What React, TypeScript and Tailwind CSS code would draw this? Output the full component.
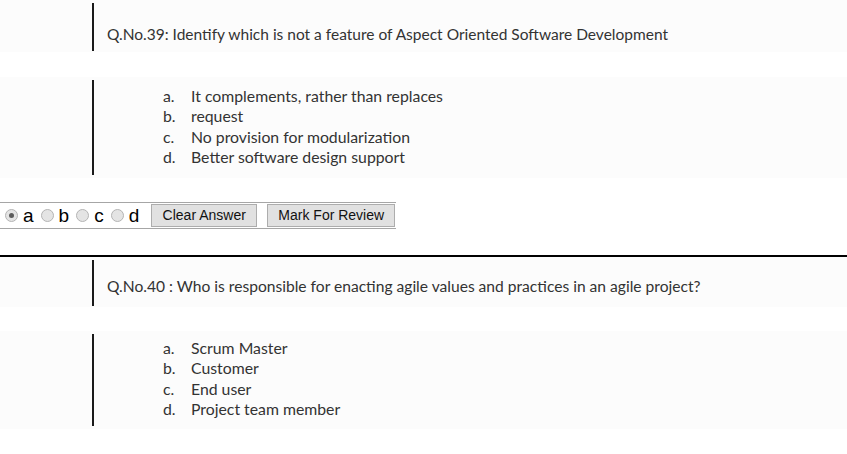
const q39 = {
  title: "Q.No.39: Identify which is not a feature of Aspect Oriented Software Development",
  options: [
    "It complements, rather than replaces",
    "request",
    "No provision for modularization",
    "Better software design support",
  ],
};

const q40 = {
  title: "Q.No.40 : Who is responsible for enacting agile values and practices in an agile project?",
  options: ["Scrum Master", "Customer", "End user", "Project team member"],
};

const letters = ["a", "b", "c", "d"];

function QuestionImage({
  title,
  options,
  compact,
}: {
  title: string;
  options: string[];
  compact?: boolean;
}) {
  return (
    <div className="font-['Lato',sans-serif] text-[#333333]">
      <div className={compact ? "flex h-[50px] bg-[#fcfcfc] pl-[92px]" : "flex h-[52px] bg-[#fcfcfc] pl-[92px]"}>
        <div className={compact ? "mt-[3px] h-[46px] w-[2px] bg-[#1a1a1a]" : "mt-[3px] h-[48px] w-[2px] bg-[#1a1a1a]"} />
        <div className={compact ? "ml-[13px] pt-[19px] text-[15.6px] leading-[20px]" : "ml-[13px] pt-[24px] text-[15.5px] leading-[20px]"}>
          {title}
        </div>
      </div>
      <div className={compact ? "mt-[24px] flex h-[98px] bg-[#fcfcfc] pl-[92px]" : "mt-[25px] flex h-[101px] bg-[#fcfcfc] pl-[92px]"}>
        <div className={compact ? "mt-[3px] h-[92px] w-[2px] bg-[#1a1a1a]" : "mt-[3px] h-[95px] w-[2px] bg-[#1a1a1a]"} />
        <ol className={compact ? "ml-[69px] pt-[7px] text-[15.8px] leading-[20.3px]" : "ml-[69px] pt-[9px] text-[15.8px] leading-[20.3px]"}>
          {options.map((o, i) => (
            <li key={o} className="flex">
              <span className="w-[28px]">{letters[i]}.</span>
              <span>{o}</span>
            </li>
          ))}
        </ol>
      </div>
    </div>
  );
}

function Radio({ checked }: { checked?: boolean }) {
  return (
    <span className="flex h-[13px] w-[13px] items-center justify-center rounded-full border border-[#b4b4b4] bg-[#e4e4e4]">
      {checked && <span className="h-[5px] w-[5px] rounded-full bg-[#5c5c5c]" />}
    </span>
  );
}

function AnswerBar() {
  return (
    <div className="flex h-[27px] w-[396px] items-center border-y border-[#a6a6a6] font-['Liberation_Sans',Arial,sans-serif]">
      <div className="flex items-center pl-[5px] text-[19px] leading-none text-black">
        {letters.map((l) => (
          <label key={l} className="mr-[7px] flex items-center gap-[5px]">
            <Radio checked={l === "a"} />
            <span>{l}</span>
          </label>
        ))}
      </div>
      <button className="ml-[5px] h-[23px] w-[106px] border border-[#adadad] bg-[#e1e1e1] text-[14px] text-[#111]">
        Clear Answer
      </button>
      <button className="ml-[10px] h-[23px] w-[128px] border border-[#adadad] bg-[#e1e1e1] text-[14px] text-[#111]">
        Mark For Review
      </button>
    </div>
  );
}

export default function App() {
  return (
    <div className="h-[454px] w-[847px] overflow-hidden bg-white">
      <QuestionImage {...q39} />
      <div className="mt-[24px]">
        <AnswerBar />
      </div>
      <div className="mt-[26px] h-[2px] w-full bg-black" />
      <QuestionImage {...q40} compact />
    </div>
  );
}
